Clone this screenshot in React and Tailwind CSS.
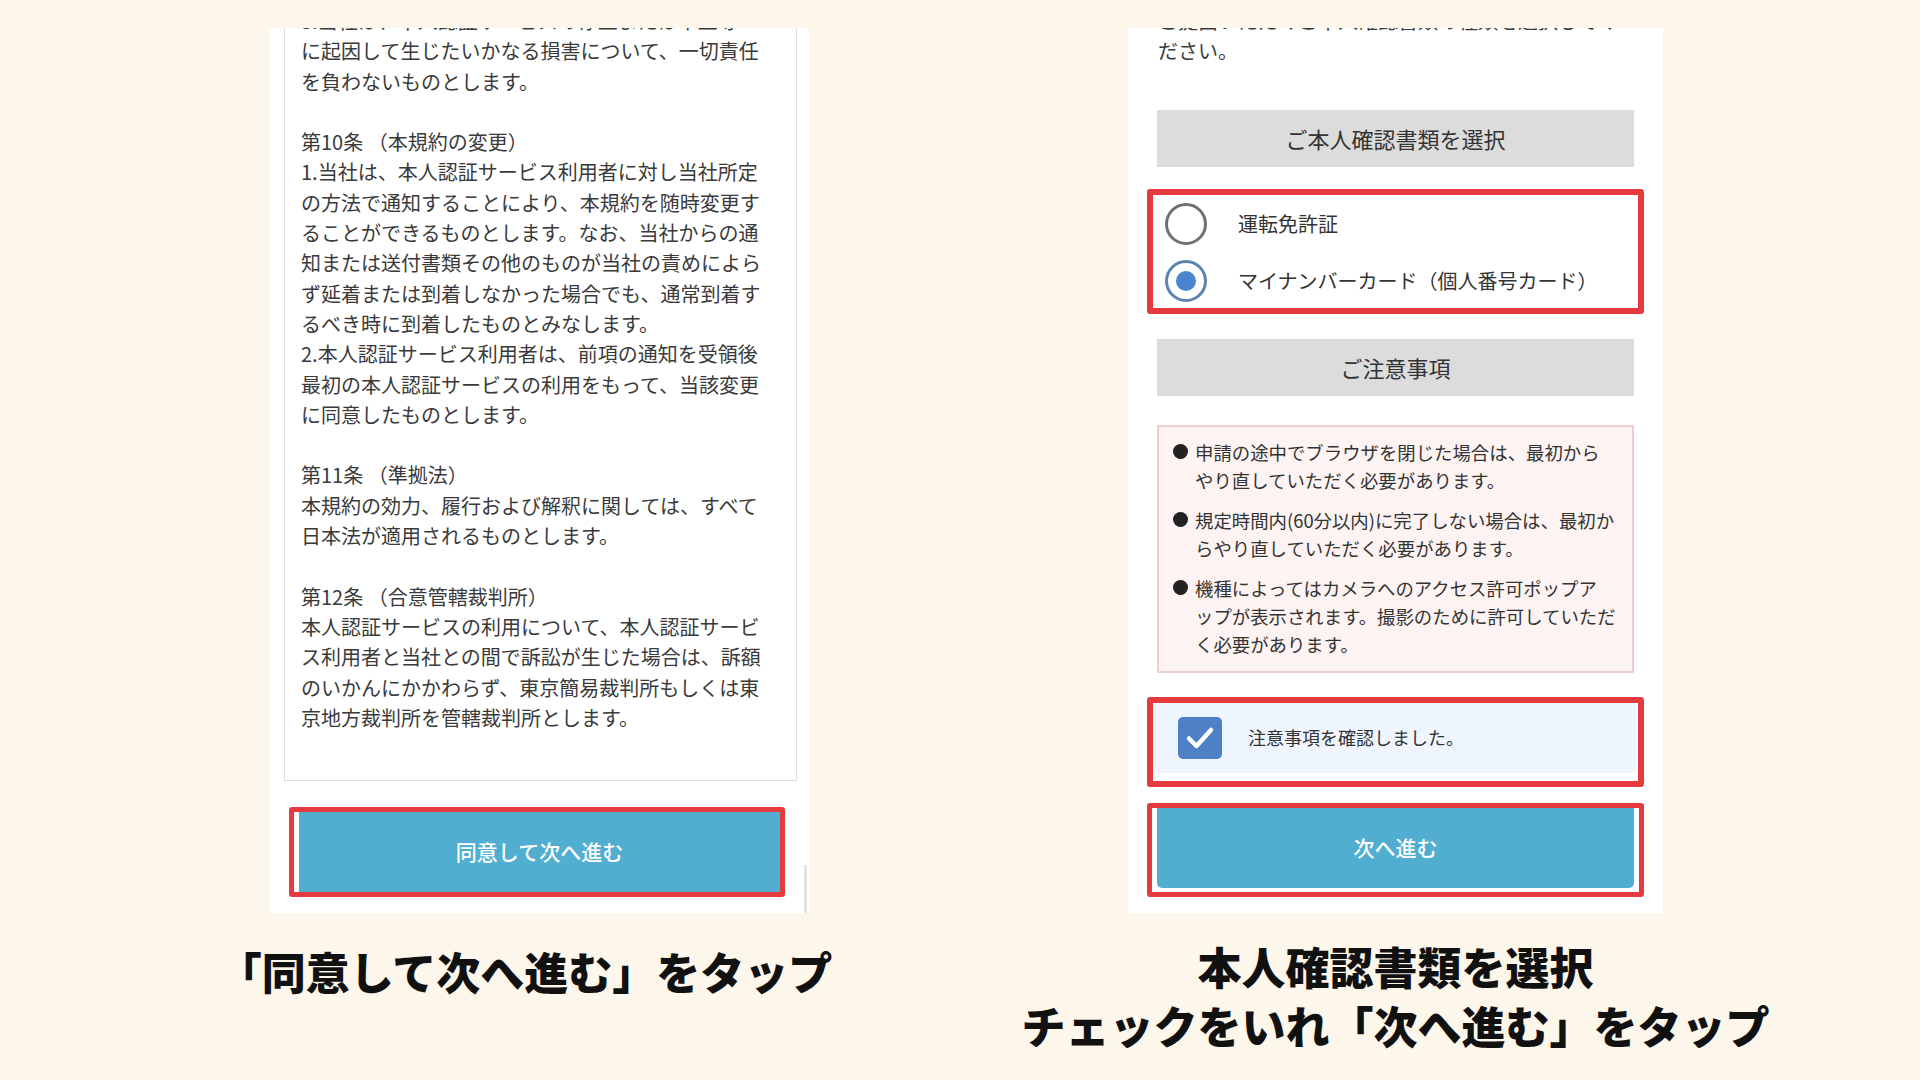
import React from 'react';

const jp = { fontFamily: '"Noto Sans CJK JP", "Noto Sans", sans-serif' };

const termsLines = [
  '3.当社は、本人認証サービスの停止または中止等',
  'に起因して生じたいかなる損害について、一切責任',
  'を負わないものとします。',
  '',
  '第10条 （本規約の変更）',
  '1.当社は、本人認証サービス利用者に対し当社所定',
  'の方法で通知することにより、本規約を随時変更す',
  'ることができるものとします。なお、当社からの通',
  '知または送付書類その他のものが当社の責めによら',
  'ず延着または到着しなかった場合でも、通常到着す',
  'るべき時に到着したものとみなします。',
  '2.本人認証サービス利用者は、前項の通知を受領後',
  '最初の本人認証サービスの利用をもって、当該変更',
  'に同意したものとします。',
  '',
  '第11条 （準拠法）',
  '本規約の効力、履行および解釈に関しては、すべて',
  '日本法が適用されるものとします。',
  '',
  '第12条 （合意管轄裁判所）',
  '本人認証サービスの利用について、本人認証サービ',
  'ス利用者と当社との間で訴訟が生じた場合は、訴額',
  'のいかんにかかわらず、東京簡易裁判所もしくは東',
  '京地方裁判所を管轄裁判所とします。',
];

const notes = [
  ['申請の途中でブラウザを閉じた場合は、最初から', 'やり直していただく必要があります。'],
  ['規定時間内(60分以内)に完了しない場合は、最初か', 'らやり直していただく必要があります。'],
  ['機種によってはカメラへのアクセス許可ポップア', 'ップが表示されます。撮影のために許可していただ', 'く必要があります。'],
];

const TermsCard = () => (
  <div className="relative w-[540px] h-[885px] bg-white overflow-hidden">
    <div className="ml-[15px] w-[513px] border-x border-b border-[#dcdcdc] mt-[-22px] pl-[16px] pb-[47px] text-[20px] leading-[30.3px] text-[#3a3a3a]">
      {termsLines.map((line, i) => (
        <div key={i} className="whitespace-nowrap h-[30.3px]">{line}</div>
      ))}
    </div>
    <div className="ml-[20px] mt-[26px] w-[496px] h-[90px] border-[5px] border-[#e53b3f] rounded-[3px] flex bg-white pl-[5px]">
      <div className="flex-1 bg-[#52aed0] flex items-center justify-center text-white text-[21px] font-medium">
        同意して次へ進む
      </div>
    </div>
    <div className="absolute left-[535px] top-[837px] w-[3px] h-[48px] bg-[#e2e2e2]"></div>
  </div>
);

const Radio = ({ checked, label }) => (
  <div className="flex items-center h-[42px]">
    {checked ? (
      <div className="w-[42px] h-[42px] rounded-full border-[3px] border-[#5b84b3] flex items-center justify-center">
        <div className="w-[20px] h-[20px] rounded-full bg-[#4a86cf]"></div>
      </div>
    ) : (
      <div className="w-[42px] h-[42px] rounded-full border-[3px] border-[#707070]"></div>
    )}
    <span className="ml-[31px] text-[20px] text-[#333]">{label}</span>
  </div>
);

const SelectCard = () => (
  <div className="w-[535px] h-[885px] bg-white overflow-hidden flex flex-col">
    <div className="mt-[-22px] pl-[30px] text-[20px] leading-[30.3px] text-[#3a3a3a]">
      <div className="whitespace-nowrap h-[30.3px]">ご提出いただくご本人確認書類の種類を選択してく</div>
      <div className="whitespace-nowrap h-[30.3px]">ださい。</div>
    </div>

    <div className="mt-[43px] mx-[29px] h-[57px] bg-[#dcdcdc] flex items-center justify-center text-[22px] text-[#333]">
      ご本人確認書類を選択
    </div>

    <div className="mt-[22px] mx-[19px] h-[125px] border-[6px] border-[#e53b3f] rounded-[3px] pl-[12px] pt-[8px] flex flex-col gap-[15px]">
      <Radio label="運転免許証" />
      <Radio checked label="マイナンバーカード（個人番号カード）" />
    </div>

    <div className="mt-[25px] mx-[29px] h-[57px] bg-[#dcdcdc] flex items-center justify-center text-[22px] text-[#333]">
      ご注意事項
    </div>

    <div className="mt-[29px] mx-[29px] h-[248px] border-2 border-[#ebcfcf] bg-[#fdf3f2] pt-[11px] pl-[14px] flex flex-col gap-[12px] text-[18.4px] leading-[28px] text-[#333]">
      {notes.map((group, i) => (
        <div key={i} className="flex">
          <div className="w-[22px] h-[28px] flex items-center shrink-0">
            <div className="w-[15px] h-[15px] rounded-full bg-[#222]"></div>
          </div>
          <div>
            {group.map((line, j) => (
              <div key={j} className="whitespace-nowrap">{line}</div>
            ))}
          </div>
        </div>
      ))}
    </div>

    <div className="mt-[24px] mx-[19px] h-[90px] border-[6px] border-[#e53b3f] rounded-[3px] px-[2px] pb-[8px] bg-white">
      <div className="h-full bg-[#eef5fe] flex items-center pl-[23px]">
        <div className="w-[44px] h-[42px] rounded-[5px] bg-[#4d80c4] flex items-center justify-center">
          <svg width="30" height="26" viewBox="0 0 30 26">
            <path d="M4 13.5 L11.5 21 L26 5" fill="none" stroke="white" strokeWidth="4.5" strokeLinecap="round" strokeLinejoin="round" />
          </svg>
        </div>
        <span className="ml-[26px] text-[18px] text-[#333]">注意事項を確認しました。</span>
      </div>
    </div>

    <div className="mt-[16px] mx-[19px] h-[94px] border-[5px] border-[#e53b3f] rounded-[3px] px-[5px] pb-[4px] bg-white">
      <div className="h-full bg-[#52aed0] rounded-b-[5px] flex items-center justify-center text-white text-[21px] font-medium">
        次へ進む
      </div>
    </div>
  </div>
);

export default function App() {
  return (
    <div className="w-[1920px] h-[1080px] bg-[#fdf6eb] overflow-hidden flex pl-[269px] pt-[28px] gap-[319px]" style={jp}>
      <div className="w-[540px] shrink-0 flex flex-col items-center">
        <TermsCard />
        <div className="mt-[32px] mr-[28px] text-[44px] leading-[52px] font-black text-[#111] whitespace-nowrap">
          「同意して次へ進む」をタップ
        </div>
      </div>
      <div className="w-[535px] shrink-0 flex flex-col items-center">
        <SelectCard />
        <div className="mt-[24px] text-[44px] leading-[59px] font-black text-[#111] text-center whitespace-nowrap">
          <div>本人確認書類を選択</div>
          <div>チェックをいれ「次へ進む」をタップ</div>
        </div>
      </div>
    </div>
  );
}
